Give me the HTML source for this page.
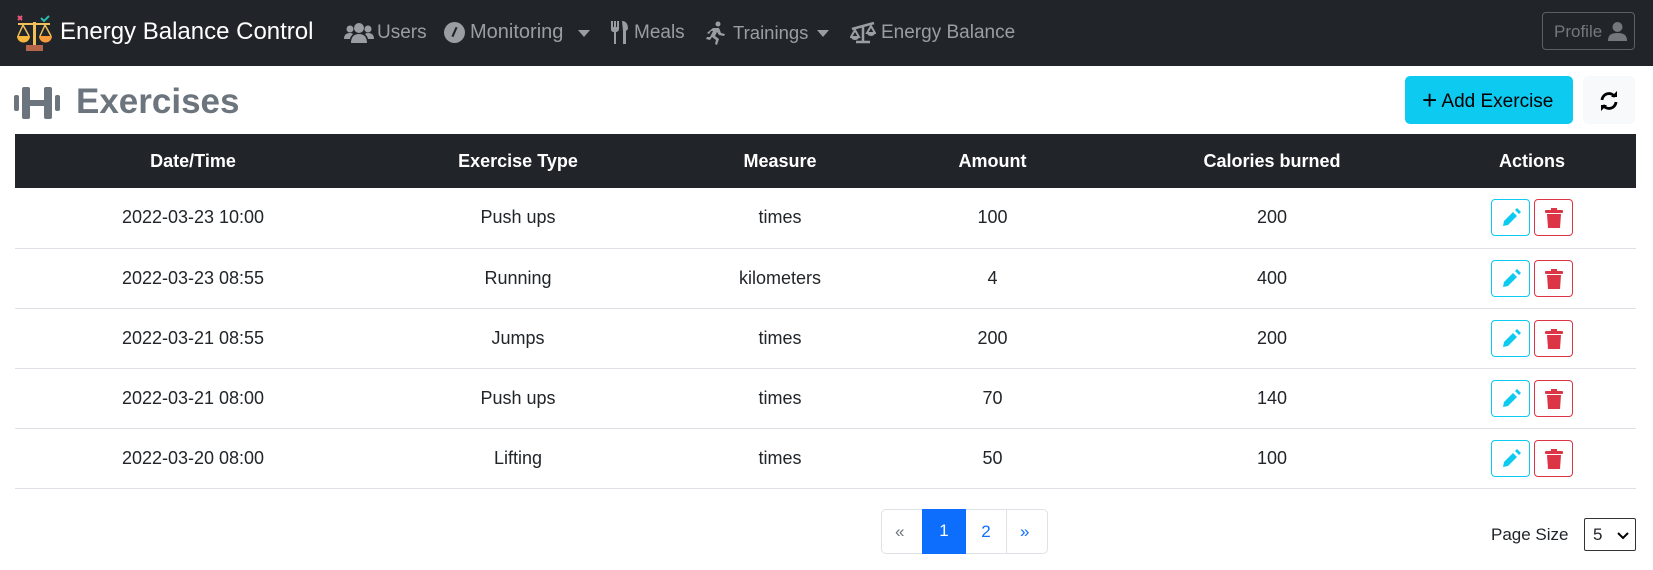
<!DOCTYPE html>
<html><head><meta charset="utf-8"><style>
*{box-sizing:border-box;margin:0;padding:0}
body{width:1653px;height:570px;overflow:hidden;background:#fff;font-family:"Liberation Sans",sans-serif;color:#212529;position:relative}
.nav{position:absolute;left:0;top:0;width:1653px;height:66px;background:#212529}
.a{position:absolute;white-space:nowrap}
.nl{color:#9a9da1;font-size:19px;top:22px}
.brand{color:#fff;font-size:24px;top:18px;left:60px}
table{position:absolute;left:15px;top:134px;width:1621px;border-collapse:collapse;font-size:18px}
th{background:#212529;color:#fff;height:54px;font-weight:bold}
td{height:60px;text-align:center;border-bottom:1px solid #dee2e6}
th:last-child,td:last-child{padding-right:26px}
.b{display:inline-block;width:39px;height:37px;border:1px solid;border-radius:4px;vertical-align:middle;margin:0 2px;position:relative}
.b svg{position:absolute;left:9px;top:8px}
.e{border-color:#0dcaf0}.d{border-color:#dc3545}
</style></head><body>
<div class="nav">
<svg class="a" style="left:14px;top:12px" width="40" height="40" viewBox="0 0 40 40"><path d="M4 4l4 4M8 4l-4 4" stroke="#e6577b" stroke-width="2"/><path d="M27 6l3 3 5-5" stroke="#2bbbad" stroke-width="2" fill="none"/><rect x="19" y="10" width="3" height="24" fill="#f0c05a"/><rect x="4" y="11" width="32" height="2" fill="#f0c05a"/><path d="M3 24a6 6 0 0 0 13 0z" fill="#f6b73c"/><path d="M25 24a6 6 0 0 0 13 0z" fill="#f79a3c"/><path d="M9 13l-5 11M9 13l6 11M31 13l-5 11M31 13l6 11" stroke="#f0c05a" stroke-width="1.5" fill="none"/><rect x="12" y="33" width="17" height="6" fill="#b5654a"/></svg>
<div class="a brand">Energy Balance Control</div>
<svg class="a" style="left:344px;top:22px" width="30" height="22" viewBox="0 0 30 22"><circle cx="15" cy="6" r="5" fill="#9a9da1"/><circle cx="6" cy="7" r="3.5" fill="#9a9da1"/><circle cx="24" cy="7" r="3.5" fill="#9a9da1"/><path d="M7 21c0-6 3-9 8-9s8 3 8 9z M0 17c0-4 2-6 6-6 2 0 3 1 3 1-2 2-3 4-3 5z M30 17c0-4-2-6-6-6-2 0-3 1-3 1 2 2 3 4 3 5z" fill="#9a9da1"/></svg>
<div class="a nl" style="left:377px">Users</div>
<svg class="a" style="left:444px;top:22px" width="21" height="21" viewBox="0 0 20 20"><circle cx="10" cy="10" r="10" fill="#9a9da1"/><path d="M8 14l4-9" stroke="#212529" stroke-width="2"/></svg>
<div class="a nl" style="left:470px;font-size:20px;top:21px">Monitoring</div>
<svg class="a" style="left:578px;top:30px" width="12" height="7"><path d="M0 0h12L6 7z" fill="#9a9da1"/></svg>
<svg class="a" style="left:611px;top:21px" width="20" height="23" viewBox="0 0 20 23"><path d="M0 0h2v6h1V0h2v6h1V0h2v8c0 2-2 3-3 3v12H3V11C1 11 0 10 0 8z M11 0c4 0 6 3 6 8l-2 2v13h-3V10z" fill="#9a9da1"/></svg>
<div class="a nl" style="left:634px">Meals</div>
<svg class="a" style="left:706px;top:21px" width="20" height="24" viewBox="0 0 20 24"><circle cx="12" cy="3" r="2.5" fill="#9a9da1"/><path d="M7 7l6 0 2 5 4 1-1 2-5-1-2-3-2 4 4 3-2 6-2-1 1-4-4-3-2 3-4-1 1-2 3 0 3-6-2 0-2 3-2-1z" fill="#9a9da1"/></svg>
<div class="a nl" style="left:733px;font-size:18.5px">Trainings</div>
<svg class="a" style="left:817px;top:30px" width="12" height="7"><path d="M0 0h12L6 7z" fill="#9a9da1"/></svg>
<svg class="a" style="left:850px;top:21px" width="26" height="23" viewBox="0 0 26 23"><path d="M2 8l22-6M13 4v16M6 21h14" stroke="#9a9da1" stroke-width="2.5"/><path d="M5 9l-4 7h8z M21 5l-4 7h8z" stroke="#9a9da1" stroke-width="2" fill="none"/><path d="M1 16a4 3 0 0 0 8 0z M17 12a4 3 0 0 0 8 0z" fill="#9a9da1"/></svg>
<div class="a nl" style="left:881px">Energy Balance</div>
<div class="a" style="left:1542px;top:12px;width:93px;height:38px;border:1px solid #5c6065;border-radius:4px;color:#74787d;font-size:17px;padding:9px 0 0 11px">Profile
<svg style="position:absolute;left:65px;top:9px" width="19" height="19" viewBox="0 0 19 19"><circle cx="9.5" cy="5" r="5" fill="#74787d"/><path d="M0 19c0-6 3-8 9.5-8s9.5 2 9.5 8z" fill="#74787d"/></svg></div>
</div>
<svg class="a" style="left:14px;top:85px" width="46" height="36" viewBox="0 0 46 36"><rect x="0" y="10" width="5" height="16" rx="2" fill="#6c757d"/><rect x="8" y="2" width="8" height="32" rx="2" fill="#6c757d"/><rect x="16" y="15" width="14" height="6" fill="#6c757d"/><rect x="30" y="2" width="8" height="32" rx="2" fill="#6c757d"/><rect x="41" y="10" width="5" height="16" rx="2" fill="#6c757d"/></svg>
<div class="a" style="left:76px;top:82px;font-size:35px;font-weight:bold;color:#6c757d">Exercises</div>
<div class="a" style="left:1405px;top:76px;width:168px;height:48px;background:#0dcaf0;border-radius:5px;font-size:19px;color:#000;padding:15px 0 0 17px"><span style="font-size:26px;position:relative;top:2px;line-height:0">+</span> Add Exercise</div>
<div class="a" style="left:1583px;top:76px;width:52px;height:48px;background:#f8f9fa;border-radius:5px">
<svg style="position:absolute;left:16px;top:15px" width="20" height="20" viewBox="0 0 20 20"><path d="M3 9a7 7 0 0 1 13-3" stroke="#000" stroke-width="2.8" fill="none"/><path d="M12 6h6V0z" fill="#000"/><path d="M17 11a7 7 0 0 1-13 3" stroke="#000" stroke-width="2.8" fill="none"/><path d="M8 14H2v6z" fill="#000"/></svg></div>
<table>
<tr><th style="width:356px">Date/Time</th><th style="width:294px">Exercise Type</th><th style="width:230px">Measure</th><th style="width:195px">Amount</th><th style="width:364px">Calories burned</th><th>Actions</th></tr>
<tr><td>2022-03-23 10:00</td><td>Push ups</td><td>times</td><td>100</td><td>200</td><td><span class="b e"><svg width="20" height="20" viewBox="0 0 20 20"><path d="M12 4l4 4-9 9-5 1 1-5zM14 2l2-2 4 4-2 2z" fill="#0dcaf0"/></svg></span><span class="b d"><svg width="20" height="20" viewBox="0 0 20 20"><rect x="1" y="2" width="18" height="3" rx="1" fill="#dc3545"/><rect x="7" y="0" width="6" height="3" fill="#dc3545"/><path d="M3 6h14l-1 14H4z" fill="#dc3545"/></svg></span></td></tr>
<tr><td>2022-03-23 08:55</td><td>Running</td><td>kilometers</td><td>4</td><td>400</td><td><span class="b e"><svg width="20" height="20" viewBox="0 0 20 20"><path d="M12 4l4 4-9 9-5 1 1-5zM14 2l2-2 4 4-2 2z" fill="#0dcaf0"/></svg></span><span class="b d"><svg width="20" height="20" viewBox="0 0 20 20"><rect x="1" y="2" width="18" height="3" rx="1" fill="#dc3545"/><rect x="7" y="0" width="6" height="3" fill="#dc3545"/><path d="M3 6h14l-1 14H4z" fill="#dc3545"/></svg></span></td></tr>
<tr><td>2022-03-21 08:55</td><td>Jumps</td><td>times</td><td>200</td><td>200</td><td><span class="b e"><svg width="20" height="20" viewBox="0 0 20 20"><path d="M12 4l4 4-9 9-5 1 1-5zM14 2l2-2 4 4-2 2z" fill="#0dcaf0"/></svg></span><span class="b d"><svg width="20" height="20" viewBox="0 0 20 20"><rect x="1" y="2" width="18" height="3" rx="1" fill="#dc3545"/><rect x="7" y="0" width="6" height="3" fill="#dc3545"/><path d="M3 6h14l-1 14H4z" fill="#dc3545"/></svg></span></td></tr>
<tr><td>2022-03-21 08:00</td><td>Push ups</td><td>times</td><td>70</td><td>140</td><td><span class="b e"><svg width="20" height="20" viewBox="0 0 20 20"><path d="M12 4l4 4-9 9-5 1 1-5zM14 2l2-2 4 4-2 2z" fill="#0dcaf0"/></svg></span><span class="b d"><svg width="20" height="20" viewBox="0 0 20 20"><rect x="1" y="2" width="18" height="3" rx="1" fill="#dc3545"/><rect x="7" y="0" width="6" height="3" fill="#dc3545"/><path d="M3 6h14l-1 14H4z" fill="#dc3545"/></svg></span></td></tr>
<tr><td>2022-03-20 08:00</td><td>Lifting</td><td>times</td><td>50</td><td>100</td><td><span class="b e"><svg width="20" height="20" viewBox="0 0 20 20"><path d="M12 4l4 4-9 9-5 1 1-5zM14 2l2-2 4 4-2 2z" fill="#0dcaf0"/></svg></span><span class="b d"><svg width="20" height="20" viewBox="0 0 20 20"><rect x="1" y="2" width="18" height="3" rx="1" fill="#dc3545"/><rect x="7" y="0" width="6" height="3" fill="#dc3545"/><path d="M3 6h14l-1 14H4z" fill="#dc3545"/></svg></span></td></tr>
</table>
<div class="a" style="left:881px;top:509px;width:167px;height:45px;border:1px solid #dee2e6;border-radius:5px;font-size:17px;color:#0d6efd">
<span class="a" style="left:13px;top:12px;color:#6c757d">«</span>
<span class="a" style="left:40px;top:-1px;width:44px;height:45px;background:#0d6efd;color:#fff;text-align:center;padding-top:12px">1</span>
<span class="a" style="left:84px;top:0;width:41px;height:43px;border-right:1px solid #dee2e6;text-align:center;padding-top:12px">2</span>
<span class="a" style="left:138px;top:12px">»</span></div>
<div class="a" style="left:1491px;top:525px;font-size:17px">Page Size</div>
<div class="a" style="left:1584px;top:518px;width:52px;height:33px;border:1px solid #333;border-radius:2px;font-size:17px;padding:6px 0 0 8px">5
<svg style="position:absolute;left:32px;top:13px" width="12" height="8"><path d="M1 1l5 5 5-5" stroke="#000" stroke-width="2" fill="none"/></svg></div>
</body></html>
